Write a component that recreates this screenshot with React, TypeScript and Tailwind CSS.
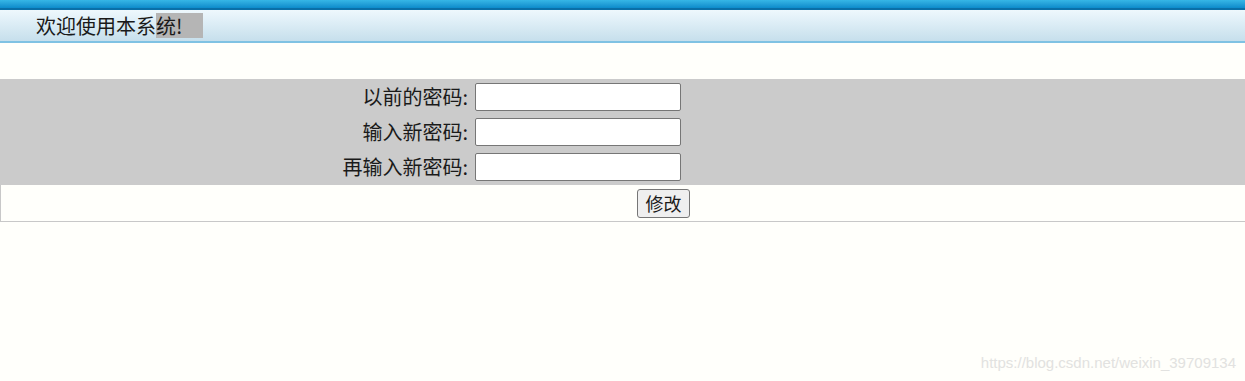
export default function App() {
  const rows = ["以前的密码:", "输入新密码:", "再输入新密码:"];

  return (
    <div className="relative min-h-[381px] w-full bg-[#fffffb] font-['Noto_Sans_CJK_SC','Microsoft_YaHei',sans-serif] text-[#1a1a1a]">
      {/* header */}
      <div className="h-[8px] bg-gradient-to-b from-[#36b6e6] to-[#0b8bcb]" />
      <div className="h-[2px] bg-[#0a6fa8]" />
      <div className="flex h-[33px] items-center border-b-2 border-[#7fc2e3] bg-gradient-to-b from-[#eef8fd] to-[#c6dfec] pl-[36px] text-[20px] leading-[25px]">
        <span>欢迎使用本系</span>
        <span className="bg-[#b5b5b5] pr-[21px]">统!</span>
      </div>

      {/* form */}
      <div className="mt-[36px]">
        <div className="bg-[#cbcbcb] py-[4px]">
          {rows.map((label, i) => (
            <div key={label} className={i < rows.length - 1 ? "flex h-[35px] items-start" : "flex h-[28px] items-start"}>
              <div className="w-[470px] pr-[2px] text-right text-[20px] leading-[28px]">{label}</div>
              <input
                type="text"
                className="ml-[5px] h-[28px] w-[206px] rounded-[2px] border border-[#767676] bg-white"
              />
            </div>
          ))}
        </div>
        <div className="flex h-[37px] items-center border-b border-l border-[#c8c8c8] pl-[636px]">
          <button className="h-[29px] w-[53px] rounded-[3px] border border-[#767676] bg-[#efefef] text-[18px] leading-none">
            修改
          </button>
        </div>
      </div>

      {/* watermark */}
      <div className="absolute right-[9px] top-[352px] font-['Liberation_Sans',Arial,sans-serif] text-[15px] text-[#e2e2e0]">
        https://blog.csdn.net/weixin_39709134
      </div>
    </div>
  );
}
